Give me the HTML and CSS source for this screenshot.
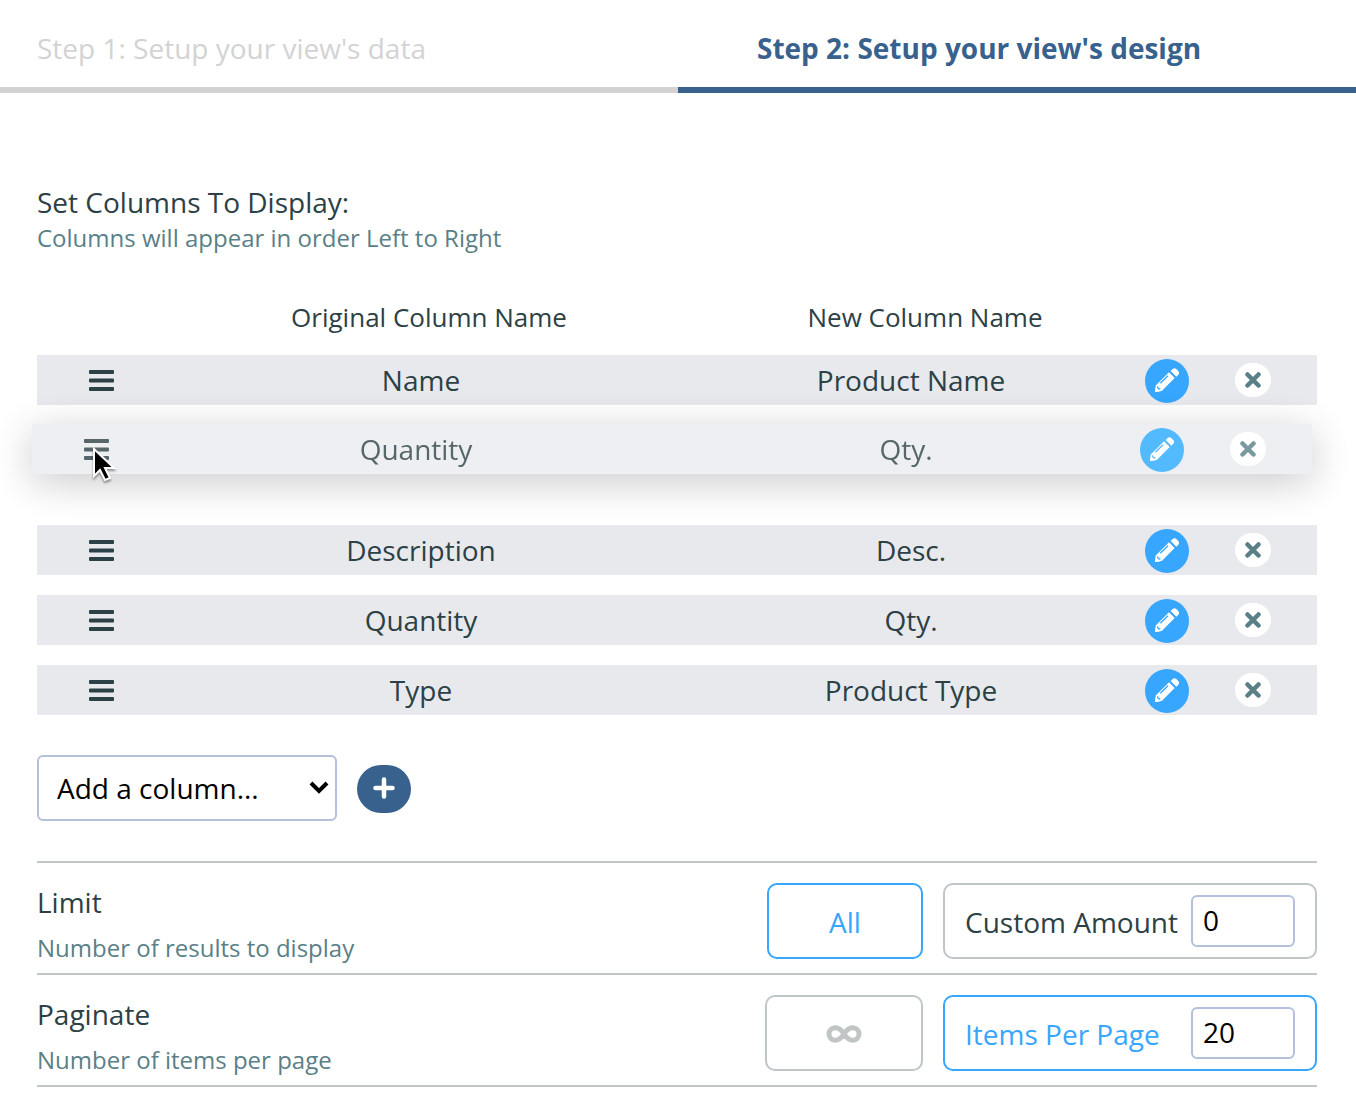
FILE: index.html
```html
<!DOCTYPE html>
<html lang="en">
<head>
<meta charset="utf-8">
<meta name="viewport" content="width=device-width, initial-scale=1">
<title>Setup your view's design</title>
<link rel="stylesheet" href="styles.css">
</head>
<body>
<svg class="sprite" aria-hidden="true">
  <symbol id="bars" viewBox="0 0 25 21">
    <rect width="25" height="4" rx="1"/><rect y="8.500" width="25" height="4" rx="1"/><rect y="17" width="25" height="4" rx="1"/>
  </symbol>
  <symbol id="pencil" viewBox="0 0 72 72">
    <path d="M47 9l6-6q5-5 11 0l5 5q6 6 1 12l-6 6z"/>
    <path d="M42 13l17 17-38 38q-9 4-21 4 0-12 3-20z"/>
    <path d="M39 23L16 46M8 55q-1 7 8 8" fill="none" stroke="#36a6ff" stroke-width="4"/>
  </symbol>
  <symbol id="times" viewBox="0 0 16 16">
    <path d="M2.500 2.500l11 11M13.500 2.500l-11 11" fill="none" stroke="currentColor" stroke-width="4.500" stroke-linecap="round"/>
  </symbol>
</svg>

<nav class="steps" aria-label="Setup steps">
  <a class="step" href="#data">Step 1: Setup your view's data</a>
  <a class="step step-current" href="#design" aria-current="step">Step 2: Setup your view's design</a>
</nav>

<main class="content" id="design">
  <header class="intro">
    <h1 class="title">Set Columns To Display:</h1>
    <p class="hint">Columns will appear in order Left to Right</p>
  </header>

  <table class="columns">
    <thead>
      <tr class="columns-head">
        <td></td><th scope="col">Original Column Name</th><th scope="col">New Column Name</th><td></td><td></td>
      </tr>
    </thead>
    <tbody class="rows">
      <tr class="row">
        <td><svg class="bars"><use href="#bars"/></svg></td>
        <td>Name</td>
        <td>Product Name</td>
        <td><button class="edit" type="button" aria-label="Edit Name"><svg class="pencil"><use href="#pencil"/></svg></button></td>
        <td><button class="remove" type="button" aria-label="Remove Name"><svg class="times"><use href="#times"/></svg></button></td>
      </tr>
      <tr class="row row-dragged">
        <td><svg class="bars"><use href="#bars"/></svg></td>
        <td>Quantity</td>
        <td>Qty.</td>
        <td><button class="edit" type="button" aria-label="Edit dragged Quantity"><svg class="pencil"><use href="#pencil"/></svg></button></td>
        <td><button class="remove" type="button" aria-label="Remove dragged Quantity"><svg class="times"><use href="#times"/></svg></button></td>
      </tr>
      <tr class="drop-space">
        <td>
          <svg class="cursor" viewBox="0 0 24 36" aria-hidden="true">
            <path d="M2 2v27l6-6 5 10 5-2-5-10h9z" fill="#000" stroke="#fff" stroke-width="2"/>
          </svg>
        </td>
      </tr>
      <tr class="row">
        <td><svg class="bars"><use href="#bars"/></svg></td>
        <td>Description</td>
        <td>Desc.</td>
        <td><button class="edit" type="button" aria-label="Edit Description"><svg class="pencil"><use href="#pencil"/></svg></button></td>
        <td><button class="remove" type="button" aria-label="Remove Description"><svg class="times"><use href="#times"/></svg></button></td>
      </tr>
      <tr class="row">
        <td><svg class="bars"><use href="#bars"/></svg></td>
        <td>Quantity</td>
        <td>Qty.</td>
        <td><button class="edit" type="button" aria-label="Edit Quantity"><svg class="pencil"><use href="#pencil"/></svg></button></td>
        <td><button class="remove" type="button" aria-label="Remove Quantity"><svg class="times"><use href="#times"/></svg></button></td>
      </tr>
      <tr class="row">
        <td><svg class="bars"><use href="#bars"/></svg></td>
        <td>Type</td>
        <td>Product Type</td>
        <td><button class="edit" type="button" aria-label="Edit Type"><svg class="pencil"><use href="#pencil"/></svg></button></td>
        <td><button class="remove" type="button" aria-label="Remove Type"><svg class="times"><use href="#times"/></svg></button></td>
      </tr>
    </tbody>
  </table>

  <div class="add">
    <div class="select-wrap">
      <select class="select" aria-label="Column to add">
        <option>Add a column...</option>
      </select>
      <svg class="chevron" viewBox="0 0 20 14" aria-hidden="true"><path d="M2 3l8 8 8-8" fill="none" stroke="#000" stroke-width="4"/></svg>
    </div>
    <button class="add-button" type="button" aria-label="Add column">
      <svg class="plus" viewBox="0 0 22 22"><path d="M11 2.500v17M2.500 11h17" stroke="#fff" stroke-width="4.500" stroke-linecap="round"/></svg>
    </button>
  </div>

  <div class="settings">
    <section class="setting">
      <div class="setting-text">
        <h2 class="title">Limit</h2>
        <p class="hint">Number of results to display</p>
      </div>
      <button class="choice choice-all choice-active" type="button">All</button>
      <div class="choice choice-amount">
        <label class="choice-label" for="limit">Custom Amount</label>
        <input class="number" id="limit" type="text" inputmode="numeric" value="0">
      </div>
    </section>
    <section class="setting">
      <div class="setting-text">
        <h2 class="title">Paginate</h2>
        <p class="hint">Number of items per page</p>
      </div>
      <button class="choice choice-infinite" type="button" aria-label="No pages">
        <svg class="infinity" viewBox="0 0 36 18"><path d="M18 9C15.500 5 13 2.800 9.200 2.800a6.200 6.200 0 0 0 0 12.400C13 15.200 15.500 13 18 9s5-6.200 8.800-6.200a6.200 6.200 0 0 1 0 12.400C23 15.200 20.500 13 18 9z" fill="none" stroke="#c0c6c6" stroke-width="5"/></svg>
      </button>
      <div class="choice choice-amount choice-active">
        <label class="choice-label" for="per-page">Items Per Page</label>
        <input class="number" id="per-page" type="text" inputmode="numeric" value="20">
      </div>
    </section>
  </div>
</main>
</body>
</html>
```
FILE: styles.css
```css
* { box-sizing: border-box; }

body {
  margin: 0;
  background: #fff;
  color: #2c4145;
  font: 28px/38px "Open Sans", "Noto Sans", sans-serif;
}

button, input, select { font: inherit; }
button { padding: 0; border: 0; cursor: pointer; }
svg { display: block; fill: currentColor; }
.sprite { position: absolute; width: 0; height: 0; }

/* Step tabs */
.steps { display: grid; grid-template-columns: 1fr 1fr; }
.step {
  padding: 29px 37px 20px;
  border-bottom: 6px solid #d3d3d3;
  color: #d3d3d3;
  text-decoration: none;
}
.step-current {
  padding-left: 79px;
  border-color: #38618e;
  color: #38618e;
  font-weight: 700;
}

.content { padding: 90px 39px 26px 37px; }
.intro { display: grid; gap: 1px; }
.title { margin: 0; font-size: 28px; font-weight: 400; line-height: 38px; }
.hint { margin: 0; color: #5a8087; font-size: 24px; line-height: 32px; }

/* Column list */
.columns { display: block; margin-top: 45px; }
.columns thead { display: block; }
.columns td, .columns th { padding: 0; }
.columns-head {
  display: grid;
  grid-template-columns: 144px 1fr 1fr 72px 72px;
  margin-bottom: 20px;
  font-size: 26px;
  line-height: 36px;
}
.columns-head th { font-weight: 400; }
.rows {
  position: relative;
  display: flex;
  flex-direction: column;
  gap: 20px;
}
.row {
  display: grid;
  grid-template-columns: 10% 40% 1fr 44px 10%;
  align-items: center;
  justify-items: center;
  height: 50px;
  background: #e8e9ed;
}
.row-dragged {
  position: absolute;
  top: 69px;
  left: -5px;
  z-index: 1;
  width: 100%;
  opacity: 0.8;
  background: #ebecef;
  box-shadow: 0 8px 42px rgba(0, 0, 0, 0.27);
}
.drop-space { display: block; height: 80px; }
.cursor {
  position: absolute;
  top: 92px;
  left: 55px;
  z-index: 2;
  width: 24px;
  height: 36px;
  filter: drop-shadow(0 2px 1px rgba(0, 0, 0, 0.4));
}
.bars { width: 25px; height: 21px; margin-top: 1px; }
.edit {
  display: grid;
  place-items: center;
  width: 44px;
  height: 44px;
  margin-top: 2px;
  padding-bottom: 2px;
  border-radius: 50%;
  background: #36a6ff;
  color: #fff;
}
.row-dragged .edit { background: #2aaaff; }
.pencil { width: 24px; height: 24px; }
.remove {
  display: grid;
  place-items: center;
  width: 36px;
  height: 34px;
  border-radius: 17px;
  background: #fff;
  color: #5a8087;
}
.times { width: 16px; height: 16px; }

/* Add a column */
.add { display: flex; align-items: center; gap: 20px; margin: 40px 0; }
.select-wrap { position: relative; width: 300px; }
.select {
  display: block;
  width: 100%;
  height: 66px;
  padding: 0 18px;
  border: 2px solid #b4c0dc;
  border-radius: 6px;
  appearance: none;
  background: #fff;
  color: #000;
}
.chevron {
  position: absolute;
  top: 25px;
  right: 8px;
  width: 20px;
  height: 14px;
  pointer-events: none;
}
.add-button {
  display: grid;
  place-items: center;
  width: 54px;
  height: 48px;
  margin-top: 2px;
  padding-bottom: 2px;
  border-radius: 24px;
  background: #38618e;
}
.plus { width: 22px; height: 22px; }

/* Limit and pagination */
.settings { border-top: 2px solid #c0c6c6; }
.setting {
  display: flex;
  align-items: flex-start;
  gap: 20px;
  padding: 20px 0 14px;
  border-bottom: 2px solid #c0c6c6;
}
.setting-text { flex: 1; display: grid; gap: 11px; margin-bottom: -5px; }
.choice {
  display: flex;
  align-items: center;
  justify-content: center;
  height: 76px;
  border: 2px solid #c0c6c6;
  border-radius: 10px;
  background: #fff;
}
.choice-active { border-color: #36a6ff; color: #36a6ff; }
.choice-all { width: 156px; padding-top: 2px; }
.choice-infinite { width: 158px; padding-top: 2px; }
.choice-amount { justify-content: space-between; width: 374px; padding: 0 20px; }
.choice-label { padding-top: 2px; }
.number {
  width: 104px;
  height: 52px;
  padding: 0 10px 2px;
  border: 2px solid #b4c0dc;
  border-radius: 6px;
  background: #fff;
  color: #000;
}
.infinity { width: 36px; height: 18px; }
```
